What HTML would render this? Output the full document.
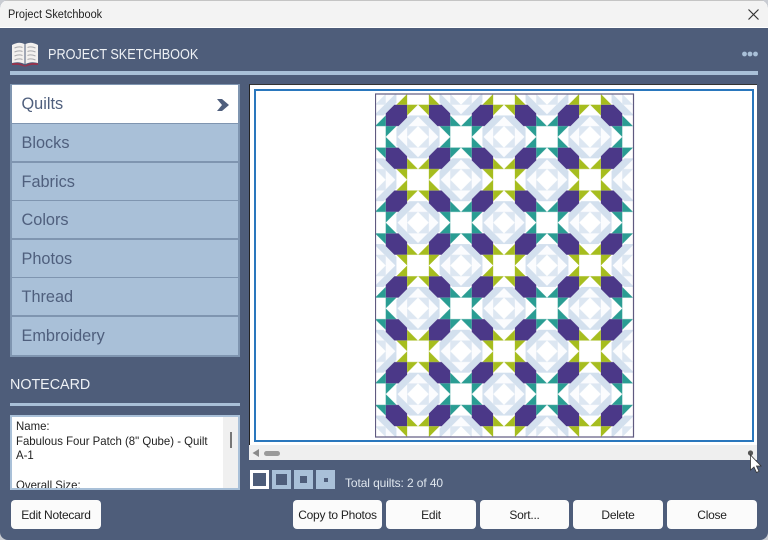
<!DOCTYPE html>
<html><head><meta charset="utf-8">
<style>
*{box-sizing:border-box}
html,body{margin:0;padding:0;width:768px;height:540px;overflow:hidden;background:#c9ccd2;font-family:"Liberation Sans",sans-serif}
.a{position:absolute}
#win{position:absolute;left:0;top:0;width:768px;height:540px;background:#4e5d7a;border-radius:8px;overflow:hidden}
#tb{position:absolute;left:0;top:0;width:768px;height:28px;background:#f3f3f3;border-top:1px solid #c4c4c4;border-bottom:1px solid #fff}
.nav{position:absolute;left:12px;width:226px;height:38px;background:#a9c0d8;color:#4f5f7d;font-size:16.3px;line-height:39.5px;padding-left:9.5px;border-bottom:1px solid #7f95b0}
.btn{position:absolute;top:500px;height:29px;background:#fbfbfb;border-radius:4px;color:#222;font-size:12px;line-height:30px;text-align:center;letter-spacing:-.25px}
.v{position:absolute;top:470px;width:19px;height:19px;background:#a9c0d8}
.v i{position:absolute;background:#4e5d7a}
</style></head><body>
<div id="win">
<div id="tb"></div>
<div class="a" style="left:8px;top:8px;font-size:11.5px;color:#222;line-height:15px;transform:scaleX(.95);transform-origin:0 0;white-space:nowrap">Project Sketchbook</div>
<svg class="a" style="left:747px;top:8px" width="13" height="13" viewBox="0 0 13 13"><path d="M1.5 1.5L11.5 11.5M11.5 1.5L1.5 11.5" stroke="#333" stroke-width="1.2" fill="none"/></svg>

<svg class="a" style="left:10px;top:41px" width="30" height="26" viewBox="0 0 30 26">
<path d="M2 22.5Q9 21 14.5 24.5H15.5Q21 21 28 22.5V24Q21 23 16 25.5H14Q9 23 2 24Z" fill="#9c3049"/>
<path d="M2 4Q9 0 14.5 3V23Q9 20 2 22Z M15.5 3Q21 0 28 4V22Q21 20 15.5 23Z" fill="#f3f0ee"/>
<path d="M4.5 7Q9 5 12.5 6.5M4.5 11Q9 9 12.5 10.5M4.5 15Q9 13 12.5 14.5M4.5 19Q9 17 12.5 18.5M17.5 6.5Q21 5 25.5 7M17.5 10.5Q21 9 25.5 11M17.5 14.5Q21 13 25.5 15M17.5 18.5Q21 17 25.5 19" stroke="#a9a9ad" stroke-width="1" fill="none"/>
</svg>
<div class="a" style="left:48px;top:46px;font-size:14.5px;line-height:18px;color:#eef1f5;transform:scaleX(.873);transform-origin:0 0;white-space:nowrap">PROJECT SKETCHBOOK</div>
<svg class="a" style="left:740px;top:50px" width="20" height="8"><circle cx="4.5" cy="4" r="2.4" fill="#a9c0d8"/><circle cx="10" cy="4" r="2.4" fill="#a9c0d8"/><circle cx="15.5" cy="4" r="2.4" fill="#a9c0d8"/></svg>
<div class="a" style="left:10px;top:71px;width:748px;height:4px;background:#a9c0d8"></div>

<div class="a" style="left:10px;top:84px;width:230px;height:273px;background:#7f95b0"></div>
<div class="nav" style="top:85px;background:#fff;height:38.5px">Quilts</div>
<svg class="a" style="left:216px;top:98px" width="14" height="14" viewBox="0 0 14 14"><path d="M1 1H6L13 7L6 13H1L6 7Z" fill="#4f5f7d"/></svg>
<div class="nav" style="top:124px">Blocks</div>
<div class="nav" style="top:162.5px">Fabrics</div>
<div class="nav" style="top:201px">Colors</div>
<div class="nav" style="top:239.5px">Photos</div>
<div class="nav" style="top:278px">Thread</div>
<div class="nav" style="top:316.5px;border-bottom:0;height:38px">Embroidery</div>

<div class="a" style="left:10px;top:376px;font-size:14.3px;line-height:18px;color:#eef1f5">NOTECARD</div>
<div class="a" style="left:10px;top:403px;width:230px;height:3px;background:#a9c0d8"></div>

<div class="a" style="left:10px;top:415px;width:230px;height:75px;background:#fff;border:2px solid #a9c0d8;overflow:hidden">
<div class="a" style="right:0;top:0;width:15px;height:100%;background:#f0f0f0"></div>
<div class="a" style="left:218px;top:15px;width:2px;height:16px;background:#777"></div>
<div class="a" style="left:4px;top:2px;width:225px;font-size:12px;line-height:14.7px;color:#222;transform:scaleX(.95);transform-origin:0 0;white-space:nowrap">Name:<br>Fabulous Four Patch (8" Qube) - Quilt<br>A-1<br><br>Overall Size:</div>
</div>

<div class="btn" style="left:11px;width:90px">Edit Notecard</div>

<div class="a" style="left:249px;top:84px;width:508px;height:362px;background:#fff;border-left:1px solid #222;border-top:1px solid #333"></div>
<div class="a" style="left:254px;top:89px;width:500px;height:353px;border:2px solid #2a77bd"></div>
<svg class="a" style="left:375px;top:93px" width="260" height="345" viewBox="375 93 260 345">
<defs>
<g id="qu">
<polygon points="1,-2.2 1.8,-3 3,-3 3,-1.8 2.2,-1 1,-1" fill="#4b3888"/>
<polygon points="0,-1 1,-2 1,-1" fill="#2a9d93"/><polygon points="1,-1 2,-1 1,0" fill="#2a9d93"/>
<polygon points="3,-3 3,-4 2,-3" fill="#a6bd1e"/><polygon points="3,-3 4,-3 3,-2" fill="#a6bd1e"/>
</g>
<g id="dm">
<polygon points="3.2,-2 4.8,-2 6,-.8 6,.8 4.8,2 3.2,2 2,.8 2,-.8" fill="#d3e0ee"/>
<polygon points="4,-1.9 5.9,0 4,1.9 2.1,0" fill="#fbfcfe"/>
<polygon points="3,-1 5,-1 5,1 3,1" fill="#dde7f2"/>
<polygon points="4,-1 5,0 4,1 3,0" fill="#fff"/>
</g>
<pattern id="q" patternUnits="userSpaceOnUse" x="418" y="94" width="86" height="85.75" viewBox="-4 -4 8 8">
<rect x="-4" y="-4" width="8" height="8" fill="#fff"/>
<use href="#qu"/>
<use href="#qu" transform="scale(-1,1)"/>
<use href="#qu" transform="scale(1,-1)"/>
<use href="#qu" transform="scale(-1,-1)"/>
<use href="#dm"/>
<use href="#dm" transform="translate(-8,0)"/>
<use href="#dm" transform="rotate(90)"/>
<use href="#dm" transform="rotate(-90)"/>
</pattern>
</defs>
<rect x="375.5" y="94" width="258" height="343" fill="url(#q)" stroke="#5f5a80" stroke-width="1.2"/>
</svg>

<div class="a" style="left:249px;top:445px;width:508px;height:15px;background:#efefef"></div>
<svg class="a" style="left:250px;top:448px" width="12" height="10"><path d="M2.5 5L9 1V9Z" fill="#8a8a8a"/></svg>
<div class="a" style="left:264px;top:451px;width:16px;height:5px;border-radius:3px;background:#9a9a9a"></div>
<svg class="a" style="left:746px;top:449px" width="18" height="26" viewBox="0 0 18 26"><circle cx="4.5" cy="4" r="2.6" fill="#555"/><path d="M4.5 6V21L8 18L10.5 23.5L13 22.3L10.5 17H15Z" fill="#fff" stroke="#333" stroke-width=".8"/></svg>

<div class="v" style="left:250px;background:#fff"><i style="left:3px;top:3px;width:13px;height:13px"></i></div>
<div class="v" style="left:272px"><i style="left:4px;top:4px;width:11px;height:11px"></i></div>
<div class="v" style="left:294px"><i style="left:6px;top:6px;width:7px;height:7px"></i></div>
<div class="v" style="left:316px"><i style="left:8px;top:8px;width:3.5px;height:3.5px"></i></div>
<div class="a" style="left:345px;top:475px;font-size:12px;line-height:16px;color:#dfe6ee;letter-spacing:-.1px">Total quilts: 2 of 40</div>

<div class="btn" style="left:293px;width:89px">Copy to Photos</div>
<div class="btn" style="left:386px;width:90px">Edit</div>
<div class="btn" style="left:480px;width:89px">Sort...</div>
<div class="btn" style="left:573px;width:90px">Delete</div>
<div class="btn" style="left:667px;width:90px">Close</div>
</div>
</body></html>
